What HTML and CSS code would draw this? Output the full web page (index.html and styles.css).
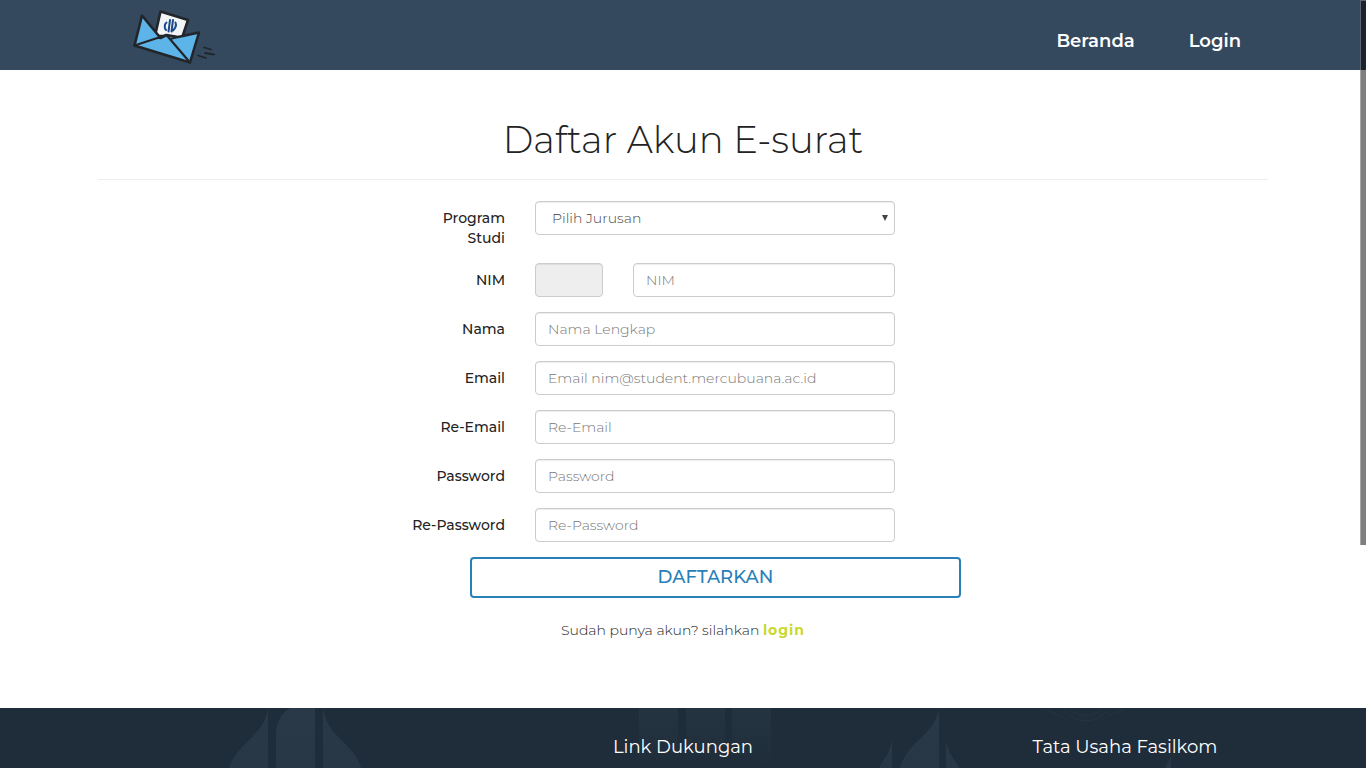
FILE: index.html
```html
<!DOCTYPE html>
<html lang="id">
<head>
<meta charset="utf-8">
<meta name="viewport" content="width=device-width, initial-scale=1">
<title>Daftar Akun E-surat</title>
<link rel="stylesheet" href="styles.css">
</head>
<body>
<header class="site-header">
  <div class="container header-inner">
    <a class="logo" href="#" aria-label="E-surat">
      <svg width="84" height="56" viewBox="0 0 84 56" fill="none" stroke="#22262a" stroke-width="2.6" stroke-linejoin="round" stroke-linecap="round">
        <path d="M23 27 28.500 2.500 56 11 50 29 35 27Z" fill="#f3f4f7"/>
        <path d="M2.500 36.500 10 6.500 28.500 29 34.500 26 46 28 67 23.500 58 53.500Z" fill="#5db4e8"/>
        <path d="M2.500 36.500 34.500 26 58 53.500M28.500 29 26 29M46 28l-8 2" stroke-width="2.200"/>
        <path d="M34.500 13.500c-2.500 2-2 6-.5 7.500M38 11l-1.500 11.500M41 11l-1.500 11.500M43.500 13.500c1.200 3-.5 6-2.500 8" stroke="#1c4a8c" stroke-width="2"/>
        <path d="M72 38.500l7 2M73 44l9 1.500M66 46.500l8 2.500" stroke-width="1.800"/>
      </svg>
    </a>
    <nav class="main-nav" aria-label="Utama">
      <a href="#">Beranda</a>
      <a href="#">Login</a>
    </nav>
  </div>
</header>

<main class="container main">
  <h1 class="title">Daftar Akun E-surat</h1>
  <form class="form">
    <div class="row">
      <label for="prodi">Program<br>Studi</label>
      <div class="select-wrap">
        <select id="prodi" class="field select"><option>Pilih Jurusan</option></select>
        <svg class="caret" width="6" height="6" viewBox="0 0 6 6" aria-hidden="true"><path d="M0 0h6L3 6z" fill="#444"/></svg>
      </div>
    </div>
    <div class="row">
      <label for="nim">NIM</label>
      <div class="nim-group">
        <input class="field" type="text" aria-label="Kode NIM" disabled>
        <input class="field" id="nim" type="text" placeholder="NIM">
      </div>
    </div>
    <div class="row">
      <label for="nama">Nama</label>
      <input class="field" id="nama" type="text" placeholder="Nama Lengkap">
    </div>
    <div class="row">
      <label for="email">Email</label>
      <input class="field" id="email" type="email" placeholder="Email nim@student.mercubuana.ac.id">
    </div>
    <div class="row">
      <label for="re-email">Re-Email</label>
      <input class="field" id="re-email" type="email" placeholder="Re-Email">
    </div>
    <div class="row">
      <label for="password">Password</label>
      <input class="field" id="password" type="password" placeholder="Password">
    </div>
    <div class="row">
      <label for="re-password">Re-Password</label>
      <input class="field" id="re-password" type="password" placeholder="Re-Password">
    </div>
    <button class="submit" type="submit">DAFTARKAN</button>
  </form>
  <p class="hint">Sudah punya akun? silahkan <a href="#">login</a></p>
</main>

<footer class="site-footer">
  <svg class="pattern" width="1366" height="60" viewBox="0 0 1366 60" aria-hidden="true">
    <defs>
      <linearGradient id="fade" x1="0" y1="0" x2="0" y2="60" gradientUnits="userSpaceOnUse">
        <stop offset="0" stop-color="#293947"/><stop offset="1" stop-color="#273746"/>
      </linearGradient>
      <linearGradient id="fade-out" x1="0" y1="0" x2="0" y2="60" gradientUnits="userSpaceOnUse">
        <stop offset="0" stop-color="#253441"/><stop offset="1" stop-color="#1f2d3a"/>
      </linearGradient>
    </defs>
    <g fill="url(#fade)">
      <path d="M268 0C265 28 237 34 229 60H268Z"/>
      <path d="M290 0H315V60H276V26C276 14 282 5 290 0Z"/>
      <path d="M323 0C327 30 354 34 361 60H323Z"/>
      <path d="M939 0C935 28 908 32 900 60H939Z"/>
      <path d="M892 32C890 46 884 50 879 60H892Z"/>
      <path d="M946 32C948 46 954 50 959 60H946Z"/>
      <path d="M1171 46C1170 53 1167 56 1165 60H1171Z"/>
    </g>
    <path d="M639 0H678V60H639ZM686 0H725V60H686ZM732 0H771V60H732Z" fill="url(#fade-out)"/>
    <path d="M1047 2l16 7M1064 0c8 17 36 17 44 0M1070 0c8 10 24 10 32 0M1108 8l17-7" fill="none" stroke="#243442"/>
  </svg>
  <div class="footer-grid">
    <div></div>
    <h2>Link Dukungan</h2>
    <h2>Tata Usaha Fasilkom</h2>
  </div>
</footer>
<div class="scroll-thumb" aria-hidden="true"></div>
</body>
</html>
```
FILE: styles.css
```css
* {
  box-sizing: border-box;
}

body {
  margin: 0;
  min-height: 100vh;
  display: flex;
  flex-direction: column;
  background: #fff;
  color: #222;
  font-family: Montserrat, Inter, "Open Sans", sans-serif;
  font-size: 14px;
  font-weight: 300;
  line-height: 20px;
}

.container {
  width: 100%;
  max-width: 1170px;
  margin: 0 auto;
}

.site-header {
  background: #34495e;
}

.header-inner {
  display: flex;
  align-items: center;
  justify-content: space-between;
  height: 70px;
  padding: 0 27px 0 34px;
}

.logo {
  display: flex;
  padding-top: 4px;
}

.main-nav {
  display: flex;
  gap: 54px;
  padding-top: 12px;
}

.main-nav a {
  color: #fff;
  font-size: 18px;
  font-weight: 600;
  line-height: 24px;
  text-decoration: none;
}

.main {
  padding: 50px 0 68px;
}

.title {
  margin: 0 0 21px;
  padding-bottom: 19px;
  border-bottom: 1px solid #eee;
  color: #222;
  font-size: 37px;
  font-weight: 300;
  line-height: 40px;
  text-align: center;
}

.form {
  display: flex;
  flex-direction: column;
  gap: 15px;
  max-width: 556px;
  margin: 0 auto;
}

.row {
  display: grid;
  grid-template-columns: 100px 1fr;
  gap: 30px;
  align-items: start;
  margin-right: 66px;
}

.row label {
  padding-top: 7px;
  font-weight: 500;
  text-align: right;
}

.field {
  width: 100%;
  height: 34px;
  padding: 6px 12px;
  border: 1px solid #ccc;
  border-radius: 4px;
  background: #fff;
  box-shadow: inset 0 1px 1px rgba(0, 0, 0, 0.075);
  color: #444;
  font: inherit;
}

.field::placeholder {
  color: #777;
  opacity: 1;
}

.field:disabled {
  background: #eee;
}

.select-wrap {
  position: relative;
}

.select {
  appearance: none;
  padding-left: 16px;
}

.caret {
  position: absolute;
  top: 14px;
  right: 7px;
  pointer-events: none;
}

.nim-group {
  display: grid;
  grid-template-columns: 68px 1fr;
  gap: 30px;
}

.submit {
  height: 41px;
  margin-left: 65px;
  padding: 0 0 2px;
  border: 2px solid #2980b9;
  border-radius: 4px;
  background: #fff;
  color: #2980b9;
  font: inherit;
  font-size: 18px;
  font-weight: 500;
}

.hint {
  margin: 22px 0 0;
  text-align: center;
}

.hint a {
  color: #c8d92b;
  font-weight: 700;
  letter-spacing: 1px;
  text-decoration: none;
}

.site-footer {
  position: relative;
  flex: 1;
  overflow: hidden;
  background: #1f2d3a;
}

.pattern {
  position: absolute;
  top: 0;
  left: 0;
}

.footer-grid {
  position: relative;
  display: grid;
  grid-template-columns: repeat(3, 1fr);
  padding: 27px 20px 0;
}

.footer-grid h2 {
  margin: 0;
  color: #fff;
  font-size: 18px;
  font-weight: 400;
  line-height: 24px;
  text-align: center;
}

.scroll-thumb {
  position: fixed;
  top: 0;
  right: 0;
  width: 6px;
  height: 71vh;
  border: 1px solid rgba(255, 255, 255, 0.3);
  border-width: 1px 0 0 1px;
  background: rgba(0, 0, 0, 0.5);
}
```
